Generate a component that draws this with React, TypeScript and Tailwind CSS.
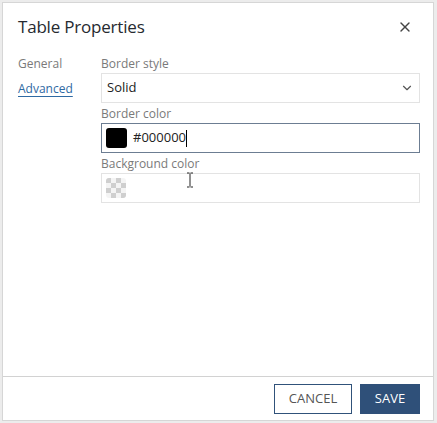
import { X, ChevronDown } from 'lucide-react';

const font = { fontFamily: '"Open Sans", "Noto Sans", sans-serif' };

function Checker() {
  return (
    <svg width="20" height="20" viewBox="0 0 20 20" className="rounded-[3px]">
      <rect width="20" height="20" fill="#f4f4f4" />
      {[0, 1, 2, 3].map((r) =>
        [0, 1, 2, 3].map((c) =>
          (r + c) % 2 === 0 ? (
            <rect key={`${r}-${c}`} x={c * 5} y={r * 5} width="5" height="5" fill="#cfcfcf" />
          ) : null,
        ),
      )}
    </svg>
  );
}

function Label({ children }: { children: React.ReactNode }) {
  return <div className="h-[18px] text-[12px] leading-[18px] text-[#7a7a7a]">{children}</div>;
}

export default function App() {
  return (
    <div className="w-[437px] h-[423px] bg-[#ececec] p-[2px]" style={font}>
      <div className="relative flex flex-col w-[432px] h-[419px] bg-white border border-[#d6d6d6]">
        <div className="flex items-center justify-between h-[44px] pt-[4px] pl-[15px] pr-[20px]">
          <h1 className="text-[17px] text-[#262a30] tracking-[-0.2px]">Table Properties</h1>
          <X size={16} strokeWidth={2} className="text-[#444]" />
        </div>

        <div className="flex flex-1 pt-[8px] pl-[15px] pr-[13px]">
          <nav className="flex flex-col w-[83px] text-[12px] leading-[18px]">
            <span className="text-[#7a7a7a]">General</span>
            <span className="mt-[7px] text-[#2f6aa3] underline underline-offset-[3px] decoration-[#2f6aa3]">
              Advanced
            </span>
          </nav>

          <div className="flex flex-col flex-1">
            <Label>Border style</Label>
            <div className="flex items-center justify-between h-[30px] px-[5px] border border-[#e3e3e3] text-[13px] text-[#222]">
              <span>Solid</span>
              <ChevronDown size={14} strokeWidth={2} className="text-[#555]" />
            </div>

            <div className="mt-[2px]">
              <Label>Border color</Label>
            </div>
            <div className="flex items-center gap-[6px] h-[30px] px-[4px] border border-[#6c7d92] text-[13px] text-[#222]">
              <div className="w-[21px] h-[20px] rounded-[3px] bg-black" />
              <span className="flex items-center">
                #000000<span className="inline-block w-px h-[17px] bg-black" />
              </span>
            </div>

            <div className="mt-[2px]">
              <Label>Background color</Label>
            </div>
            <div className="relative flex items-center h-[30px] px-[4px] border border-[#e3e3e3]">
              <Checker />
              <svg
                width="8"
                height="16"
                viewBox="0 0 8 16"
                className="absolute left-[84px] top-[-2px]"
              >
                <path d="M1 1h2.5M4.5 1H7M4 1.5v13M1 15h2.5M4.5 15H7" stroke="#222" strokeWidth="1" fill="none" />
              </svg>
            </div>
          </div>
        </div>

        <div className="flex justify-end gap-[8px] h-[44px] pt-[7px] pr-[13px] border-t border-[#d2d2d2]">
          <button className="w-[78px] h-[30px] border border-[#30527a] text-[13px] text-[#555] bg-white">
            CANCEL
          </button>
          <button className="w-[60px] h-[30px] bg-[#2f5079] text-[13px] text-white">SAVE</button>
        </div>
      </div>
    </div>
  );
}
